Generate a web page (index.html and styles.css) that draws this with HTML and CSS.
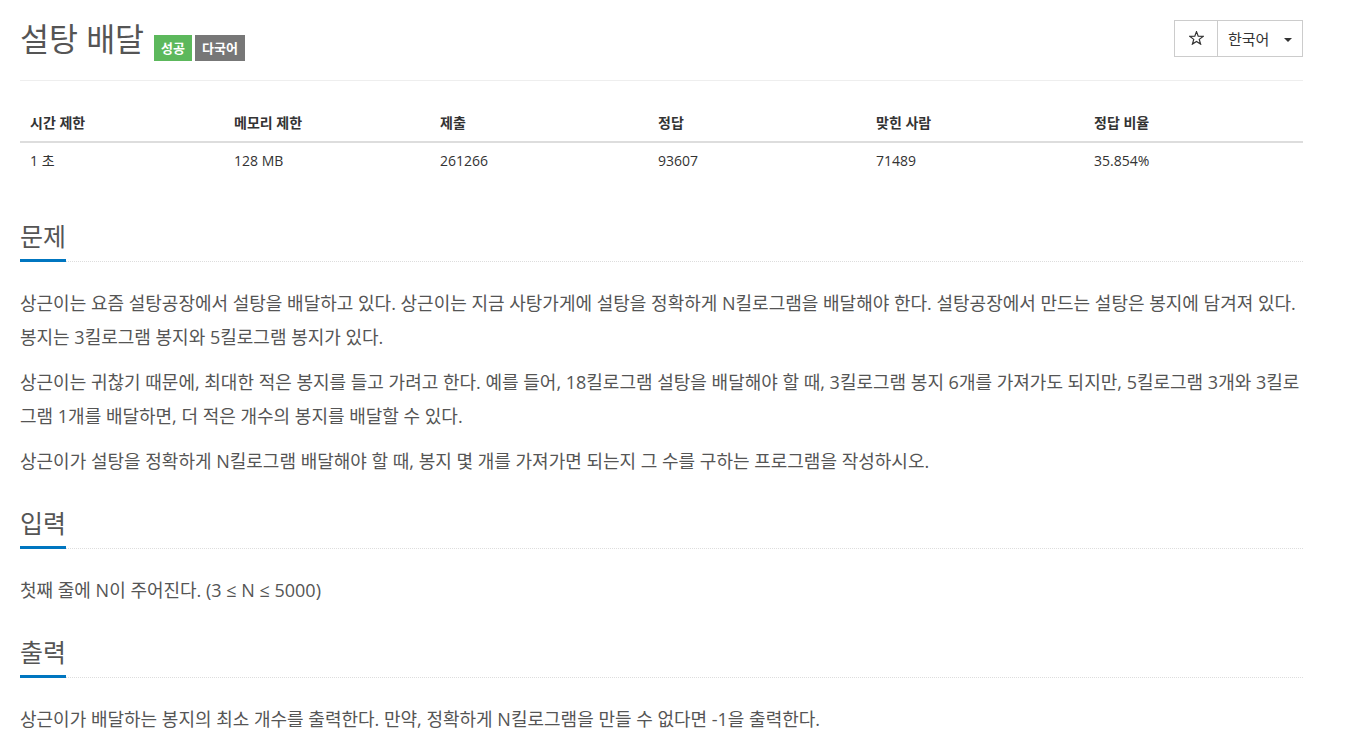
FILE: index.html
```html
<!DOCTYPE html>
<html lang="ko">
<head>
<meta charset="utf-8">
<title>설탕 배달</title>
<link rel="stylesheet" href="styles.css">
</head>
<body>
<div class="page">
  <div class="page-header">
    <h1 class="title">
      <span class="title-text">설탕 배달</span>
      <span class="badges">
        <span class="badge badge-success">성공</span>
        <span class="badge badge-lang">다국어</span>
      </span>
    </h1>
    <div class="btn-group">
      <button class="btn btn-star" type="button" aria-label="즐겨찾기">
        <svg class="star-icon" width="15" height="14" viewBox="0 0 15 14" aria-hidden="true">
          <path d="M7.5 0.6 L9.2 5.15 L14.1 5.35 L10.25 8.4 L11.6 13.1 L7.5 10.4 L3.4 13.1 L4.75 8.4 L0.9 5.35 L5.8 5.15 Z" fill="none" stroke="#333" stroke-width="1.2" stroke-linejoin="miter"/>
        </svg>
      </button>
      <button class="btn btn-lang" type="button"><span>한국어</span><span class="caret"></span></button>
    </div>
  </div>

  <table class="info-table">
    <thead>
      <tr>
        <th class="c1">시간 제한</th>
        <th class="c2">메모리 제한</th>
        <th class="c3">제출</th>
        <th class="c4">정답</th>
        <th class="c5">맞힌 사람</th>
        <th class="c6">정답 비율</th>
      </tr>
    </thead>
    <tbody>
      <tr>
        <td>1 초 </td>
        <td>128 MB</td>
        <td>261266</td>
        <td>93607</td>
        <td>71489</td>
        <td>35.854%</td>
      </tr>
    </tbody>
  </table>

  <section class="problem-section">
    <div class="headline"><h2>문제</h2></div>
    <div class="problem-text">
      <p>상근이는 요즘 설탕공장에서 설탕을 배달하고 있다. 상근이는 지금 사탕가게에 설탕을 정확하게 N킬로그램을 배달해야 한다. 설탕공장에서 만드는 설탕은 봉지에 담겨져 있다. 봉지는 3킬로그램 봉지와 5킬로그램 봉지가 있다.</p>
      <p>상근이는 귀찮기 때문에, 최대한 적은 봉지를 들고 가려고 한다. 예를 들어, 18킬로그램 설탕을 배달해야 할 때, 3킬로그램 봉지 6개를 가져가도 되지만, 5킬로그램 3개와 3킬로그램 1개를 배달하면, 더 적은 개수의 봉지를 배달할 수 있다.</p>
      <p>상근이가 설탕을 정확하게 N킬로그램 배달해야 할 때, 봉지 몇 개를 가져가면 되는지 그 수를 구하는 프로그램을 작성하시오.</p>
    </div>
  </section>

  <section class="problem-section">
    <div class="headline"><h2>입력</h2></div>
    <div class="problem-text">
      <p>첫째 줄에 N이 주어진다. (3 ≤ N ≤ 5000)</p>
    </div>
  </section>

  <section class="problem-section">
    <div class="headline"><h2>출력</h2></div>
    <div class="problem-text">
      <p>상근이가 배달하는 봉지의 최소 개수를 출력한다. 만약, 정확하게 N킬로그램을 만들 수 없다면 -1을 출력한다.</p>
    </div>
  </section>
</div>
</body>
</html>
```

FILE: styles.css
```css
html, body {
  margin: 0;
  padding: 0;
  background: #fff;
}

body {
  font-family: "Open Sans", "Noto Sans CJK KR", sans-serif;
  color: #555;
}

.page {
  width: 1283px;
  margin-left: 20px;
  display: flex;
  flex-direction: column;
}

/* header */
.page-header {
  display: flex;
  justify-content: space-between;
  align-items: center;
  padding-top: 20px;
  padding-bottom: 23px;
  border-bottom: 1px solid #eee;
}

.title {
  margin: 0;
  display: flex;
  align-items: center;
  height: 37px;
  font-size: 31.5px;
  font-weight: 400;
  color: #555;
}

.title-text {
  line-height: 37px;
}

.badges {
  display: flex;
  gap: 3px;
  margin-left: 10px;
  margin-top: 18px;
}

.badge {
  display: inline-block;
  height: 26px;
  line-height: 26px;
  padding: 0 7px;
  font-size: 13px;
  font-weight: 700;
  color: #fff;
}

.badge-success {
  background: #5cb85c;
}

.badge-lang {
  background: #777;
}

.btn-group {
  display: flex;
  height: 37px;
}

.btn {
  font-family: "Open Sans", "Noto Sans CJK KR", sans-serif;
  background: #fff;
  border: 1px solid #ccc;
  color: #333;
  margin: 0;
  height: 37px;
  padding: 0;
  font-size: 15px;
  display: flex;
  align-items: center;
}

.btn-star {
  width: 44px;
  justify-content: center;
}

.star-icon {
  display: block;
  margin-top: -1px;
}

.btn-lang {
  width: 85px;
  border-left: none;
  padding-left: 10px;
  gap: 15px;
}

.caret {
  width: 0;
  height: 0;
  border-left: 4px solid transparent;
  border-right: 4px solid transparent;
  border-top: 4px solid #333;
  margin-top: 2px;
}

/* table */
.info-table {
  margin-top: 24px;
  margin-bottom: 12px;
  width: 100%;
  border-collapse: collapse;
  font-size: 14px;
  color: #333;
}

.info-table th,
.info-table td {
  text-align: left;
  padding: 8px 10px;
  line-height: 20px;
}

.info-table th {
  font-weight: 700;
  border-bottom: 2px solid #ddd;
}

.info-table td {
  font-weight: 400;
}

.c1 { width: 184px; }
.c2 { width: 186px; }
.c3 { width: 198px; }
.c4 { width: 198px; }
.c5 { width: 198px; }

/* sections */
.problem-section {
  margin-top: 30px;
}

.headline {
  border-bottom: 1px dotted #ddd;
}

.headline h2 {
  display: inline-block;
  margin: 0 0 -1px 0;
  font-size: 25px;
  font-weight: 400;
  line-height: 30px;
  padding-bottom: 8px;
  border-bottom: 3px solid #0076c0;
  color: #555;
}

.problem-text {
  margin-top: 24px;
  font-size: 18px;
  line-height: 34px;
  color: #555;
}

.problem-text p {
  margin: 0 0 11px 0;
}

.problem-text p:last-child {
  margin-bottom: 0;
}
```
